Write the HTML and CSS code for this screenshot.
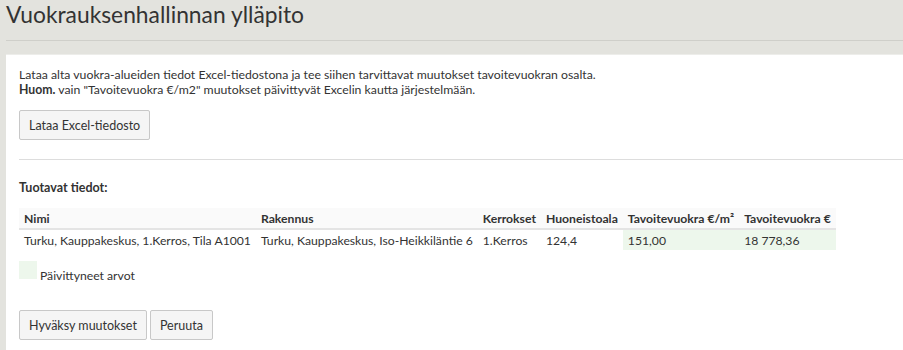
FILE: index.html
```html
<!DOCTYPE html>
<html lang="fi">
  <head>
    <meta charset="UTF-8" />
    <meta name="viewport" content="width=device-width, initial-scale=1.0" />
    <title>Vuokrauksenhallinnan ylläpito</title>
    <link rel="stylesheet" href="styles.css">
  </head>
  <body>
    <div class="page">
      <h1 class="page-title">Vuokrauksenhallinnan ylläpito</h1>

      <div class="panel">
        <p class="intro">
          Lataa alta vuokra-alueiden tiedot Excel-tiedostona ja tee siihen tarvittavat muutokset tavoitevuokran osalta.<br>
          <b>Huom.</b> vain "Tavoitevuokra €/m2" muutokset päivittyvät Excelin kautta järjestelmään.
        </p>
        <button class="btn" type="button">Lataa Excel-tiedosto</button>

        <hr class="divider">

        <h4 class="section-title">Tuotavat tiedot:</h4>

        <table class="import-table">
          <thead>
            <tr>
              <th>Nimi</th>
              <th>Rakennus</th>
              <th>Kerrokset</th>
              <th>Huoneistoala</th>
              <th>Tavoitevuokra €/m²</th>
              <th>Tavoitevuokra €</th>
            </tr>
          </thead>
          <tbody>
            <tr>
              <td>Turku, Kauppakeskus, 1.Kerros, Tila A1001</td>
              <td>Turku, Kauppakeskus, Iso-Heikkiläntie 6</td>
              <td>1.Kerros</td>
              <td>124,4</td>
              <td class="updated">151,00</td>
              <td class="updated">18 778,36</td>
            </tr>
          </tbody>
        </table>

        <div class="legend">
          <span class="legend-swatch"></span>
          <span class="legend-text">Päivittyneet arvot</span>
        </div>

        <div class="actions">
          <button class="btn" type="button">Hyväksy muutokset</button>
          <button class="btn" type="button">Peruuta</button>
        </div>
      </div>
    </div>
  </body>
</html>
```

FILE: styles.css
```css
html,
body {
  margin: 0;
  padding: 0;
  overflow: hidden;
}

body {
  font-family: Lato, "Noto Sans", sans-serif;
  background: #e3e3de;
  color: #333;
  font-size: 12.25px;
}

.page {
  padding-left: 6px;
}

.page-title {
  margin: 0;
  padding-top: 0;
  height: 40px;
  font-size: 22.8px;
  font-weight: normal;
  line-height: 28px;
  color: #333;
  border-bottom: 1px solid #cfcfca;
}

.panel {
  margin-top: 13px;
  background: #fff;
  border-top: 1px solid #ededea;
  padding: 12px 0 20px 13px;
  margin-right: -20px;
}

.intro {
  margin: 0 0 13px;
  line-height: 15px;
  font-size: 12.25px;
}

.intro b {
  font-weight: bold;
}

.btn {
  font-family: inherit;
  font-size: 12.5px;
  color: #333;
  background: #f5f5f5;
  border: 1px solid #c8c8c8;
  border-radius: 2px;
  height: 30px;
  padding: 0 9px;
  cursor: pointer;
}

.divider {
  border: none;
  border-top: 1px solid #ddd;
  margin: 19px 0 0;
}

.section-title {
  margin: 20px 0 13px;
  font-size: 12.5px;
  font-weight: bold;
}

.import-table {
  border-collapse: collapse;
}

.import-table th,
.import-table td {
  padding: 0 5px;
  height: 20px;
  text-align: left;
  white-space: nowrap;
  font-size: 12.2px;
}

.import-table th {
  background: #fafafa;
  border-bottom: 2px solid #e4e4e4;
  font-weight: bold;
}

.import-table td.updated {
  background: #edf7ec;
}

.legend {
  display: flex;
  align-items: flex-end;
  gap: 3px;
  margin-top: 11px;
}

.legend-swatch {
  width: 18px;
  height: 18px;
  background: #edf7ec;
}

.legend-text {
  font-size: 12.2px;
  line-height: 12px;
  margin-bottom: -3px;
}

.actions {
  display: flex;
  gap: 3px;
  margin-top: 31px;
}
```
